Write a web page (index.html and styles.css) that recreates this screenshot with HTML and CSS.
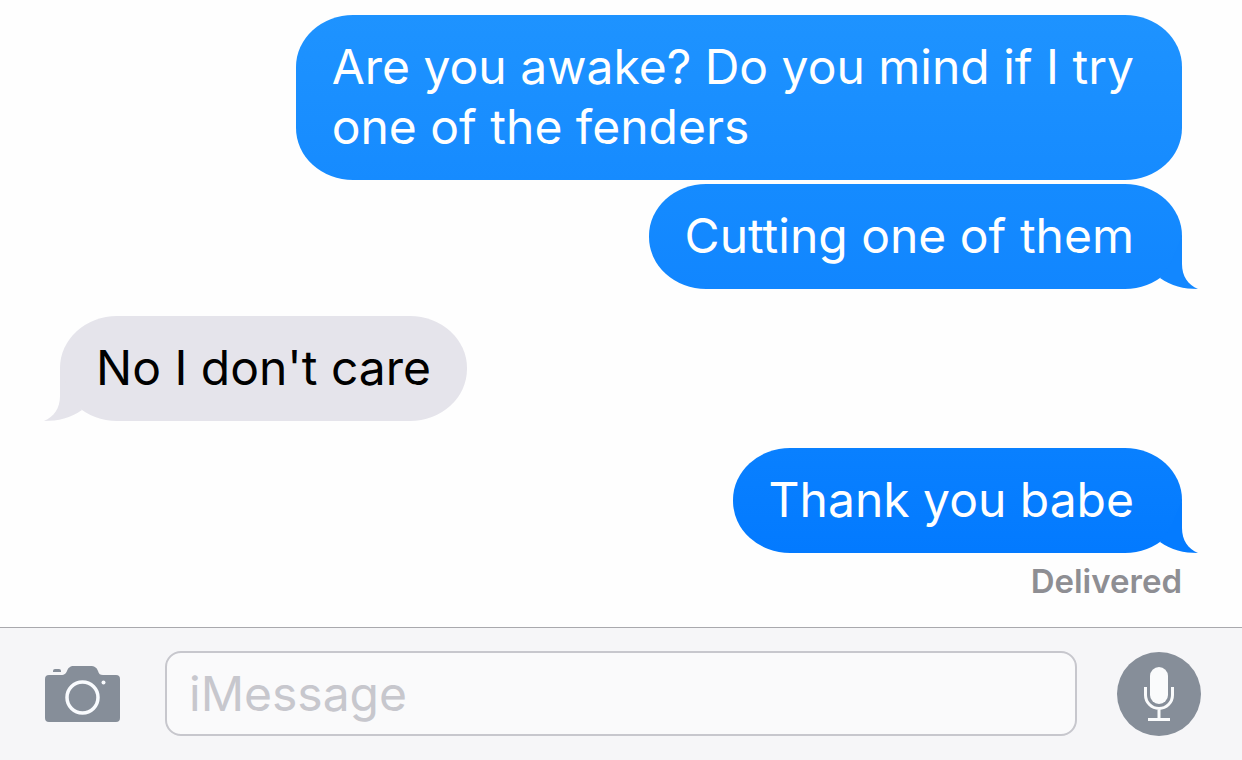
FILE: index.html
```
<!DOCTYPE html>
<html lang="en">
<head>
    <meta charset="UTF-8">
    <meta name="viewport" content="width=device-width, initial-scale=1.0">
    <title>Messages</title>
    <link rel="stylesheet" href="styles.css">
</head>
<body>
    <main class="thread">
        <p class="bubble sent">Are you awake? Do you mind if I try one of the fenders</p>
        <p class="bubble sent follow">Cutting one of them
            <svg class="tail" viewBox="0 0 40 60" aria-hidden="true"><path d="M23 8V35C23 47 29 56 39 60C25 60 12 57 1 49L12 34Z"/></svg>
        </p>
        <p class="bubble received">No I don't care
            <svg class="tail" viewBox="0 0 40 60" aria-hidden="true"><path d="M17 8V35C17 47 11 56 1 60C15 60 28 57 39 49L28 34Z"/></svg>
        </p>
        <p class="bubble sent last">Thank you babe
            <svg class="tail" viewBox="0 0 40 60" aria-hidden="true"><path d="M23 8V35C23 47 29 56 39 60C25 60 12 57 1 49L12 34Z"/></svg>
        </p>
        <p class="status">Delivered</p>
    </main>

    <form class="composer">
        <button type="button" class="camera" aria-label="Camera">
            <svg width="75" height="56" viewBox="0 0 75 56" aria-hidden="true">
                <path fill="#868e99" d="M4 9H16C20 9 21 7 22 5C23 2 25 0 29 0H45C50 0 52 2 53 5C54 8 55 9 58 9H71Q75 9 75 13V52Q75 56 71 56H4Q0 56 0 52V13Q0 9 4 9Z"/>
                <path fill="#868e99" d="M8 6V5Q8 3 10 3H14Q16 3 16 5V6Z"/>
                <circle cx="37.500" cy="31.500" r="15.500" fill="none" stroke="#f9fbfe" stroke-width="3.500"/>
                <circle cx="58.500" cy="16.500" r="2" fill="#f9fbfe"/>
            </svg>
        </button>
        <input type="text" class="message" placeholder="iMessage" aria-label="iMessage">
        <button type="button" class="mic" aria-label="Record audio">
            <svg width="84" height="84" viewBox="0 0 84 84" aria-hidden="true">
                <rect x="33" y="15" width="18" height="37" rx="9" fill="#fafbfc"/>
                <path d="M28.500 35V43A13.500 13.500 0 0 0 55.500 43V35M42 57V67M31 67.500H53" fill="none" stroke="#fafbfc" stroke-width="3"/>
            </svg>
        </button>
    </form>
</body>
</html>
```
FILE: styles.css
```
* {
    box-sizing: border-box;
}
body {
    margin: 0;
    min-height: 100vh;
    display: flex;
    flex-direction: column;
    background-color: #fefefe;
    color: black;
    font-family: Inter, "Liberation Sans", sans-serif;
}
.thread {
    flex: 1;
    display: flex;
    flex-direction: column;
    padding: 15px 60px 24px;
}
.bubble {
    position: relative;
    max-width: 79%;
    margin: 0 0 27px;
    padding: 22px 36px 23px;
    border-radius: 57px / 52px;
    font-size: 48px;
    line-height: 60px;
}
.sent {
    align-self: flex-end;
    padding-right: 48px;
    background: linear-gradient(#1e93ff, #168bff);
    color: white;
}
/* second message of the same group sits right under the first */
.sent:first-child {
    margin-bottom: 4px;
}
.follow {
    background: linear-gradient(#158bff, #1186ff);
}
.last {
    margin-bottom: 8px;
    background: linear-gradient(#0980ff, #037aff);
}
.received {
    align-self: flex-start;
    background: #e5e4eb;
}
.tail {
    position: absolute;
    bottom: 0;
    width: 40px;
    height: 60px;
}
.sent .tail {
    right: -17px;
    fill: #1287ff;
}
.last .tail {
    fill: #047bff;
}
.received .tail {
    left: -17px;
    fill: #e5e4eb;
}
.status {
    align-self: flex-end;
    margin: 0;
    color: #8e8e93;
    font-size: 33px;
    font-weight: 600;
    line-height: 40px;
}
.composer {
    display: flex;
    align-items: center;
    padding: 23px 41px 23px 45px;
    border-top: 1px solid #a9a9ad;
    background: #f6f6f8;
}
.composer button {
    flex: none;
    padding: 0;
    border: 0;
    background: none;
}
.composer svg {
    display: block;
}
.message {
    flex: 1;
    min-width: 0;
    height: 85px;
    margin: 0 40px 1px 45px;
    padding: 0 22px;
    border: 2px solid #c7c7cd;
    border-radius: 16px;
    background: #fafafb;
    font-family: inherit;
    font-size: 48px;
}
.message::placeholder {
    color: #c7c7cd;
    opacity: 1;
}
.composer .mic {
    border-radius: 50%;
    background: #868e99;
}
```
